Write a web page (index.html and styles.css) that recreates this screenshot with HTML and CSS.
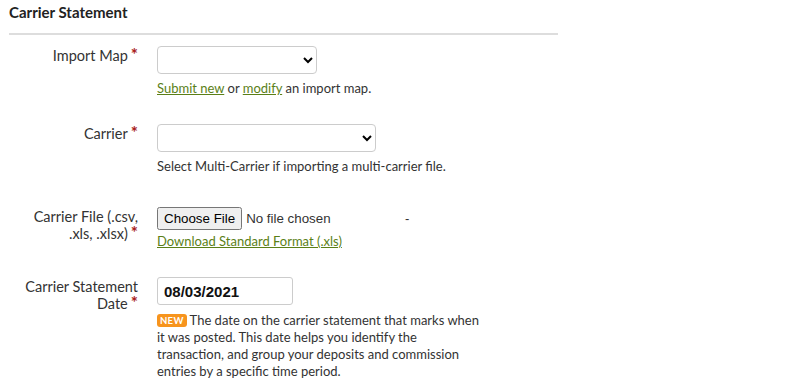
FILE: index.html
```html
<!DOCTYPE html>
<html>
<head>
<meta charset="utf-8">
<link rel="stylesheet" href="styles.css">
</head>
<body>
<div class="panel">
  <h2 class="title">Carrier Statement</h2>
  <div class="form">
    <div class="row">
      <label class="label">Import Map<span class="req">*</span></label>
      <div class="field">
        <select class="select select-map"><option></option></select>
        <p class="help"><a href="#">Submit new</a> or <a href="#">modify</a> an import map.</p>
      </div>
    </div>
    <div class="row">
      <label class="label">Carrier<span class="req">*</span></label>
      <div class="field">
        <select class="select select-carrier"><option></option></select>
        <p class="help">Select Multi-Carrier if importing a multi-carrier file.</p>
      </div>
    </div>
    <div class="row row-file">
      <label class="label">Carrier File (.csv,<br>.xls, .xlsx)<span class="req">*</span></label>
      <div class="field">
        <div class="file-line">
          <input type="file" class="file">
          <span class="dash">-</span>
        </div>
        <p class="help help-link"><a href="#">Download Standard Format (.xls)</a></p>
      </div>
    </div>
    <div class="row">
      <label class="label">Carrier Statement<br>Date<span class="req">*</span></label>
      <div class="field">
        <input type="text" class="date" value="08/03/2021">
        <p class="help help-wide"><span class="badge">NEW</span> The date on the carrier statement that marks when it was posted. This date helps you identify the transaction, and group your deposits and commission entries by a specific time period.</p>
      </div>
    </div>
  </div>
</div>
</body>
</html>
```

FILE: styles.css
```css
html, body {
  margin: 0;
  padding: 0;
  background: #fff;
}
body {
  font-family: "Lato", "Liberation Sans", sans-serif;
  color: #333;
  font-size: 13px;
}
.panel {
  padding: 0 0 0 9px;
  width: 549px;
}
.title {
  margin: 0;
  padding-top: 3px;
  font-size: 15px;
  font-weight: 700;
  line-height: 19px;
  color: #222;
  padding-bottom: 11px;
  border-bottom: 2px solid #ddd;
}
.form {
  padding-top: 11px;
}
.row {
  display: flex;
  gap: 19px;
  margin-bottom: 27px;
}
.row-file {
  padding-top: 5px;
}
.label {
  width: 129px;
  flex: none;
  text-align: right;
  font-size: 14.5px;
  line-height: 17px;
  padding-top: 1px;
  color: #333;
}
.req {
  display: inline-block;
  color: #a8201a;
  font-weight: 700;
  margin-left: 3px;
  font-size: 17px;
  line-height: 10px;
  height: 10px;
  vertical-align: baseline;
}
.field {
  display: flex;
  flex-direction: column;
}
.select {
  height: 28px;
  border: 1px solid #ccc;
  border-radius: 4px;
  background: #fff;
  font-size: 13px;
}
.select-map { width: 160px; }
.select-carrier { width: 219px; }
.help {
  margin: 6px 0 0;
  line-height: 17px;
  font-size: 13px;
  color: #333;
}
.help a {
  color: #5b7f17;
  text-decoration: underline;
}
.help-link {
  margin-top: 4px;
}
.help-wide {
  width: 328px;
  margin-top: 7px;
}
.file-line {
  display: flex;
  align-items: center;
  height: 22px;
}
.file {
  font-family: "Liberation Sans", Arial, sans-serif;
  font-size: 13.33px;
  width: 248px;
}
.file::file-selector-button {
  font-family: "Liberation Sans", Arial, sans-serif;
  font-size: 13.33px;
  padding: 2px 5px;
  margin-right: 4px;
}
.dash {
  font-family: "Liberation Sans", Arial, sans-serif;
  font-size: 13px;
}
.date {
  box-sizing: border-box;
  width: 136px;
  height: 28px;
  border: 1px solid #ccc;
  border-radius: 3px;
  padding: 0 6px;
  font-family: "Liberation Sans", Arial, sans-serif;
  font-weight: 700;
  font-size: 15px;
  color: #111;
}
.badge {
  display: inline-block;
  background: #f7941d;
  color: #fff;
  font-weight: 700;
  font-size: 9.5px;
  line-height: 13px;
  padding: 0 3px;
  border-radius: 3px;
  letter-spacing: 0.3px;
  vertical-align: 1px;
}
```
